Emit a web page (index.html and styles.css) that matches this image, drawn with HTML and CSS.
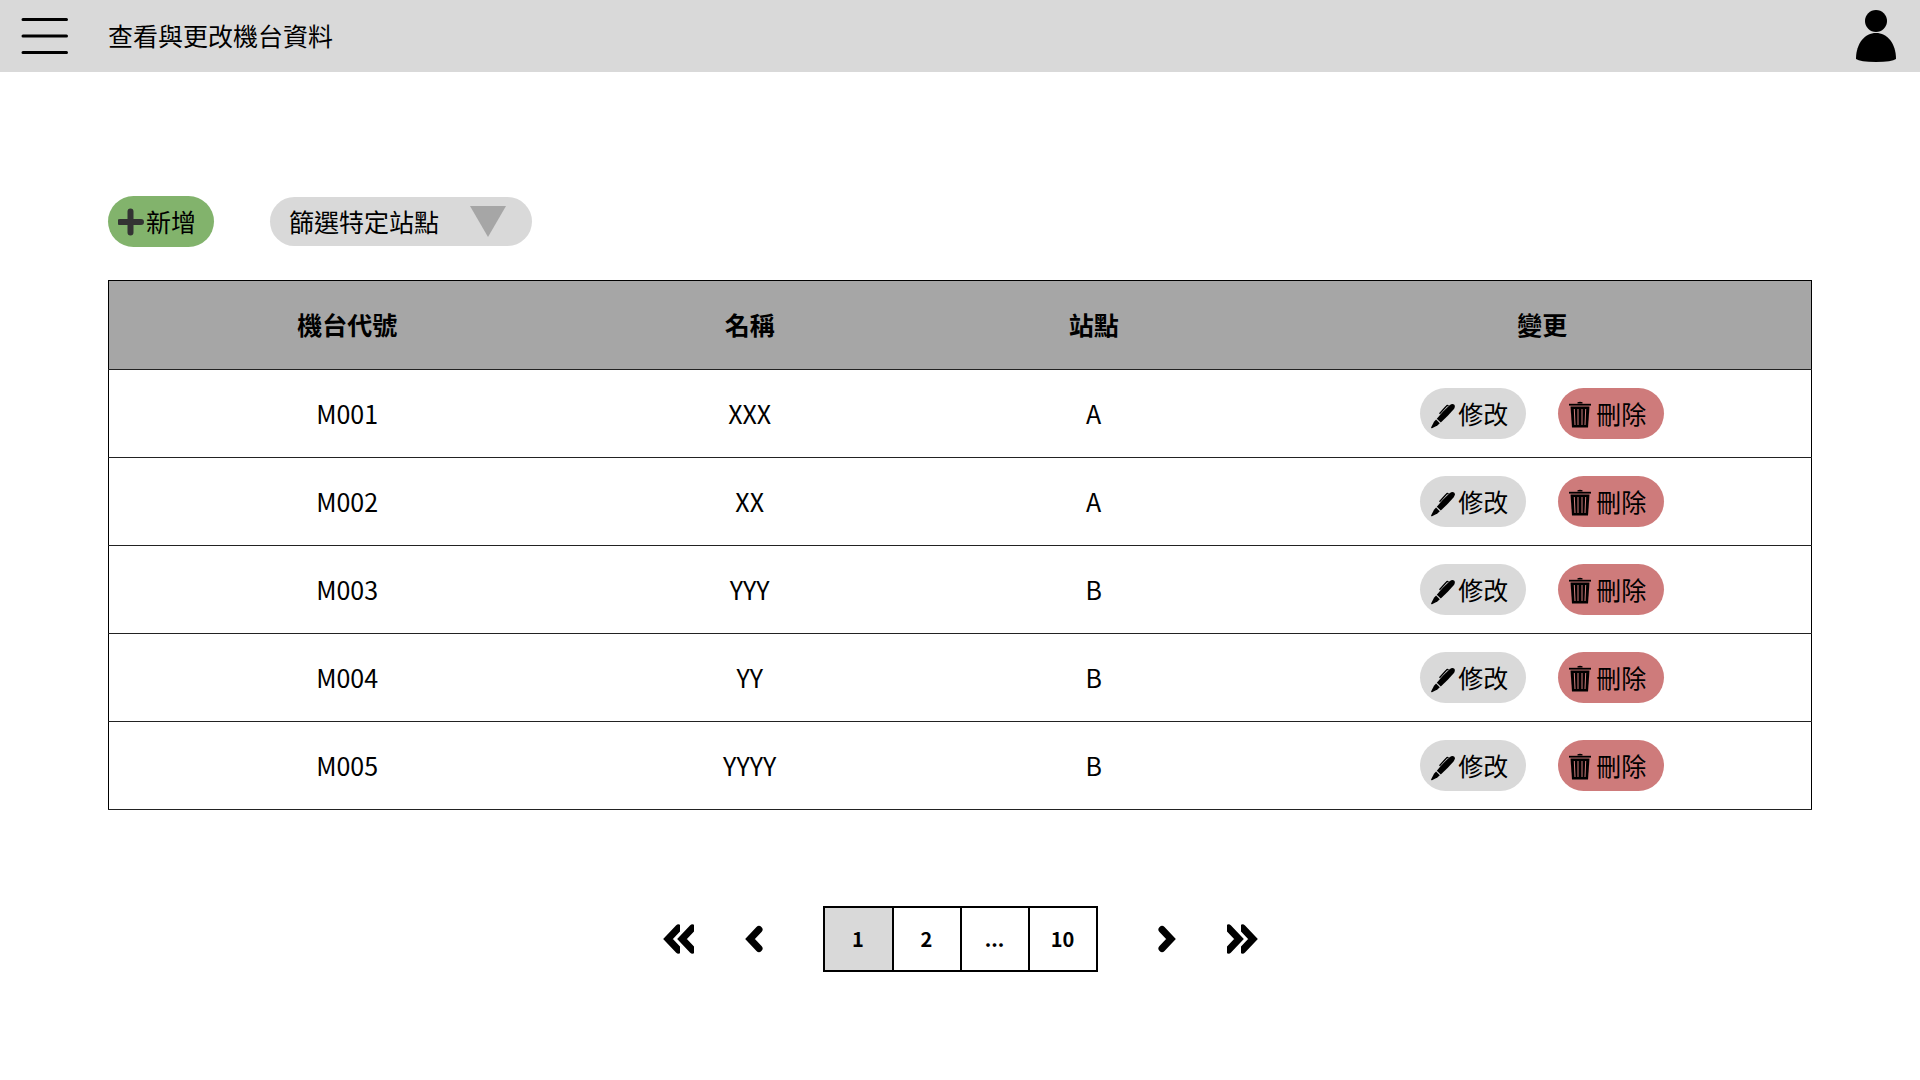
FILE: index.html
```html
<!DOCTYPE html>
<html lang="zh-Hant">
<head>
<meta charset="utf-8">
<meta name="viewport" content="width=device-width, initial-scale=1">
<title>查看與更改機台資料</title>
<link rel="stylesheet" href="styles.css">
</head>
<body>
<svg class="sprite" aria-hidden="true">
  <symbol id="pen" viewBox="0 -5 28 32">
    <path d="M19.600 3.200Q22.500 1 24.300 2.700Q25.800 4.500 23.500 7.500Q18 14 10.800 20.500L6.800 16.700Q12.500 9.500 19.600 3.200Z"/>
    <path d="M6.100 17.600L9.800 21.300L7.400 23.600L2 26.300Q.8 26.500 1.200 25.300L4 19.700Z"/>
    <path d="M9.500 11.700L16.300 4.200Q17.300 3 18.500 3.900" fill="none" stroke="#000" stroke-width="1.300"/>
  </symbol>
  <symbol id="trash" viewBox="0 -4 28 32">
    <path d="M9.500 1.300Q12 .2 14.500 1.300V2.500H9.500Z"/>
    <path d="M1 2.800H23V4.600H1Z"/>
    <path d="M2.500 5.500H21.500L20 26.500H4Z"/>
    <path d="M6.300 8L7 24M10 8V24M14 8V24M17.700 8L17 24" fill="none" stroke="#ce7b7b" stroke-width="1"/>
  </symbol>
  <symbol id="single" viewBox="0 0 18 28">
    <path d="M14 4.500L5 14L14 23.500" fill="none" stroke="#000" stroke-width="7" stroke-linecap="round" stroke-linejoin="miter"/>
  </symbol>
  <symbol id="double" viewBox="0 0 32 30">
    <svg width="17" height="30"><path d="M15.500 4L5 15L15.500 26" fill="none" stroke="#000" stroke-width="7" stroke-linecap="round"/></svg>
    <svg x="14" width="17" height="30"><path d="M15.500 4L5 15L15.500 26" fill="none" stroke="#000" stroke-width="7" stroke-linecap="round"/></svg>
  </symbol>
</svg>

<header class="topbar">
  <button class="icon-button" type="button" aria-label="選單">
    <svg width="48" height="36" viewBox="0 0 48 36"><path d="M2 1.500H45.500M2 18H45.500M2 34.500H45.500" stroke="#000" stroke-width="3" stroke-linecap="round"/></svg>
  </button>
  <h1 class="title">查看與更改機台資料</h1>
  <button class="icon-button user" type="button" aria-label="使用者">
    <svg width="40" height="52" viewBox="0 0 40 52"><circle cx="20" cy="11" r="11"/><path d="M0 49C0 33 9 23 20 23S40 33 40 49Q36 52 20 52T0 49Z"/></svg>
  </button>
</header>

<main class="content">
  <div class="toolbar">
    <button class="pill add" type="button">
      <svg class="icon" viewBox="0 -3 28 32"><path d="M2 14H23M12.500 3.500V24.500" stroke="#333" stroke-width="6" stroke-linecap="round"/></svg>新增
    </button>
    <div class="filter">
      <select class="filter-select" aria-label="篩選特定站點">
        <option>篩選特定站點</option>
        <option>A</option>
        <option>B</option>
      </select>
      <svg class="filter-arrow" width="36" height="31" viewBox="0 0 36 31"><path d="M0 0H36L18 31Z" fill="#a6a6a6"/></svg>
    </div>
  </div>

  <table class="machines">
    <colgroup><col class="col-code"><col class="col-name"><col class="col-station"><col></colgroup>
    <thead>
      <tr><th scope="col">機台代號</th><th scope="col">名稱</th><th scope="col">站點</th><th scope="col">變更</th></tr>
    </thead>
    <tbody>
      <tr><td>M001</td><td>XXX</td><td>A</td><td><div class="actions"><button class="pill edit" type="button"><svg class="icon"><use href="#pen"/></svg>修改</button><button class="pill delete" type="button"><svg class="icon"><use href="#trash"/></svg>刪除</button></div></td></tr>
      <tr><td>M002</td><td>XX</td><td>A</td><td><div class="actions"><button class="pill edit" type="button"><svg class="icon"><use href="#pen"/></svg>修改</button><button class="pill delete" type="button"><svg class="icon"><use href="#trash"/></svg>刪除</button></div></td></tr>
      <tr><td>M003</td><td>YYY</td><td>B</td><td><div class="actions"><button class="pill edit" type="button"><svg class="icon"><use href="#pen"/></svg>修改</button><button class="pill delete" type="button"><svg class="icon"><use href="#trash"/></svg>刪除</button></div></td></tr>
      <tr><td>M004</td><td>YY</td><td>B</td><td><div class="actions"><button class="pill edit" type="button"><svg class="icon"><use href="#pen"/></svg>修改</button><button class="pill delete" type="button"><svg class="icon"><use href="#trash"/></svg>刪除</button></div></td></tr>
      <tr><td>M005</td><td>YYYY</td><td>B</td><td><div class="actions"><button class="pill edit" type="button"><svg class="icon"><use href="#pen"/></svg>修改</button><button class="pill delete" type="button"><svg class="icon"><use href="#trash"/></svg>刪除</button></div></td></tr>
    </tbody>
  </table>

  <nav class="pagination" aria-label="分頁">
    <div class="arrows">
      <button class="icon-button" type="button" aria-label="第一頁"><svg width="32" height="30"><use href="#double"/></svg></button>
      <button class="icon-button" type="button" aria-label="上一頁"><svg width="18" height="28"><use href="#single"/></svg></button>
    </div>
    <div class="pages">
      <button class="page current" type="button" aria-current="page">1</button>
      <button class="page" type="button">2</button>
      <span class="page">...</span>
      <button class="page" type="button">10</button>
    </div>
    <div class="arrows forward">
      <button class="icon-button" type="button" aria-label="最後一頁"><svg width="32" height="30"><use href="#double"/></svg></button>
      <button class="icon-button" type="button" aria-label="下一頁"><svg width="18" height="28"><use href="#single"/></svg></button>
    </div>
  </nav>
</main>
</body>
</html>
```
FILE: styles.css
```css
* {
  box-sizing: border-box;
}

body {
  margin: 0;
  background: #fff;
  color: #000;
  font: 25px/36px "Noto Sans CJK TC", sans-serif;
}

button,
select {
  margin: 0;
  padding: 0;
  border: 0;
  background: none;
  color: inherit;
  font: inherit;
  cursor: pointer;
}

svg {
  display: block;
  flex: none;
}

.sprite {
  position: absolute;
  width: 0;
  height: 0;
}

.icon-button {
  display: flex;
}

.topbar {
  display: flex;
  align-items: center;
  height: 72px;
  padding: 0 24px 0 21px;
  background: #d9d9d9;
}

.title {
  margin: 0 0 0 39px;
  padding-bottom: 2px;
  font-size: 25px;
  font-weight: 400;
}

.user {
  margin-left: auto;
}

.content {
  padding: 124px 108px 0;
}

.toolbar {
  display: flex;
  align-items: center;
  gap: 56px;
  margin-bottom: 33px;
}

.pill {
  display: flex;
  align-items: center;
  width: 106px;
  height: 51px;
  padding: 0 0 2px 10px;
  border-radius: 26px;
  white-space: nowrap;
}

.icon {
  width: 28px;
  height: 32px;
}

.add {
  background: #82b36c;
}

.edit {
  background: #d9d9d9;
}

.delete {
  background: #ce7b7b;
}

.filter {
  position: relative;
}

.filter-select {
  display: block;
  appearance: none;
  width: 262px;
  height: 49px;
  padding: 0 64px 2px 19px;
  border-radius: 25px;
  background: #d9d9d9;
}

.filter-arrow {
  position: absolute;
  top: 9px;
  right: 26px;
  pointer-events: none;
}

.machines {
  width: 100%;
  border: 1px solid #000;
  border-collapse: collapse;
  table-layout: fixed;
  text-align: center;
}

.col-code {
  width: 28%;
}

.col-name {
  width: 19.3%;
}

.col-station {
  width: 21.1%;
}

.machines th,
.machines td {
  height: 88px;
  padding: 0 0 2px;
  border-bottom: 1px solid #222;
}

.machines th {
  height: 89px;
  background: #a6a6a6;
  font-weight: 700;
}

.machines td:last-child {
  padding: 0;
}

.actions {
  display: flex;
  justify-content: center;
  gap: 32px;
}

.pagination {
  display: flex;
  justify-content: center;
  align-items: center;
  gap: 60px;
  margin-top: 96px;
  padding-bottom: 48px;
}

.arrows {
  display: flex;
  align-items: center;
  gap: 50px;
}

.forward {
  transform: rotate(180deg);
}

.pages {
  display: flex;
  border: 2px solid #000;
}

.page {
  display: flex;
  justify-content: center;
  align-items: center;
  width: 67px;
  height: 62px;
  font-size: 20px;
  font-weight: 700;
}

.page + .page {
  width: 68px;
  border-left: 2px solid #000;
}

.current {
  background: #d9d9d9;
}
```
